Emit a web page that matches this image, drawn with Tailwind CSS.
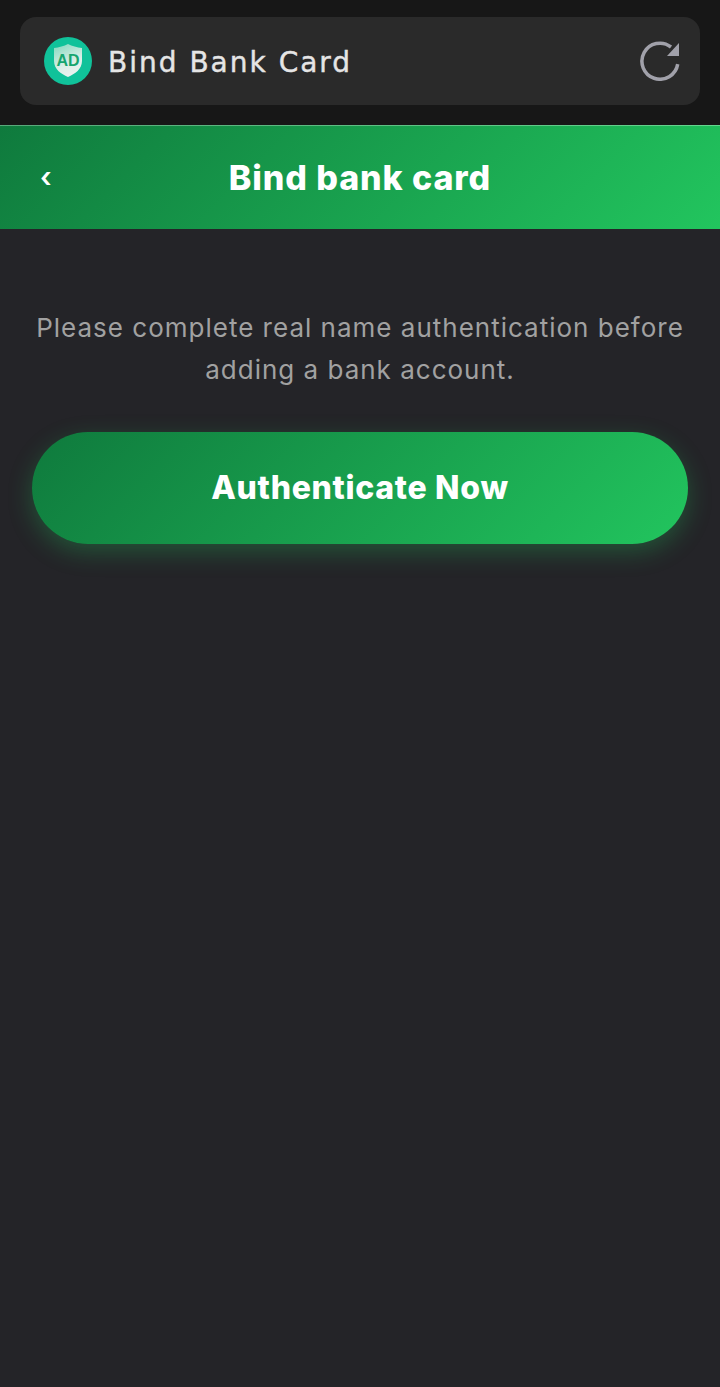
<!DOCTYPE html>
<html lang="en">

<head>
    <meta charset="UTF-8">
    <meta name="viewport" content="width=device-width, initial-scale=1.0">
    <title>Bind Bank Card</title>
    <script src="https://cdn.jsdelivr.net/npm/@tailwindcss/browser@4"></script>
</head>

<body>
    <div class="flex flex-col min-h-screen bg-[#242428] font-['Inter',sans-serif]">
        <!-- app bar -->
        <div class="h-[125px] bg-[#171717] px-5 pt-[17px]">
            <div class="h-[88px] flex items-center justify-between rounded-2xl bg-[#2a2a2a] pl-6 pr-5">
                <div class="flex items-center gap-4">
                    <svg viewBox="0 0 48 48" class="w-12 h-12">
                        <defs>
                            <linearGradient id="shield" x1="0.3" y1="0" x2="0.7" y2="1">
                                <stop offset="0" stop-color="#8fdcc4" />
                                <stop offset="0.6" stop-color="#dcefe8" />
                                <stop offset="1" stop-color="#eef2f0" />
                            </linearGradient>
                        </defs>
                        <circle cx="24" cy="24" r="24" fill="#10c29a" />
                        <path d="M24 7 C28 9 33 10.500 38 11 V24 C38 32 31 37 24 40 C17 37 10 32 10 24 V11 C15 10.500 20 9 24 7 Z" fill="url(#shield)" />
                        <text x="24" y="29" text-anchor="middle" font-family="Liberation Sans" font-weight="700" font-size="16" fill="#17a56f">AD</text>
                    </svg>
                    <span class="relative top-[2px] font-['DejaVu_Sans',sans-serif] text-[28px] leading-none text-[#e5e5e5] tracking-[2px] [-webkit-text-stroke:0.4px_#e5e5e5]">Bind Bank Card</span>
                </div>
                <svg viewBox="0 0 40 40" class="w-10 h-10" fill="none">
                    <path d="M31 6 A18 18 0 1 0 37.700 23.100" stroke="#a1a1aa" stroke-width="3.500" />
                    <path d="M39 2 V15 H27 Z" fill="#a1a1aa" />
                </svg>
            </div>
        </div>

        <!-- header -->
        <header class="relative h-[104px] flex items-center justify-center border-t border-white/30 bg-[linear-gradient(135deg,#0f7a3d,#22c55e)]">
            <span class="absolute left-10 top-[31px] text-[28px] leading-[40px] font-semibold text-white">‹</span>
            <h1 class="text-[34px] font-extrabold tracking-[0.9px] text-white">Bind bank card</h1>
        </header>

        <!-- content -->
        <main class="flex flex-col px-8 pt-[78px]">
            <p class="text-center text-[26px] leading-[42px] tracking-[1px] text-[#a1a1a1]">Please complete real name authentication before adding a bank account.</p>
            <button class="mt-[41px] h-28 w-full rounded-[56px] bg-[linear-gradient(135deg,#0f7a3d,#22c55e)] text-[32px] font-extrabold tracking-[0.7px] text-white shadow-[0_8px_24px_rgba(34,197,94,0.3)]">Authenticate Now</button>
        </main>
    </div>
</body>

</html>
